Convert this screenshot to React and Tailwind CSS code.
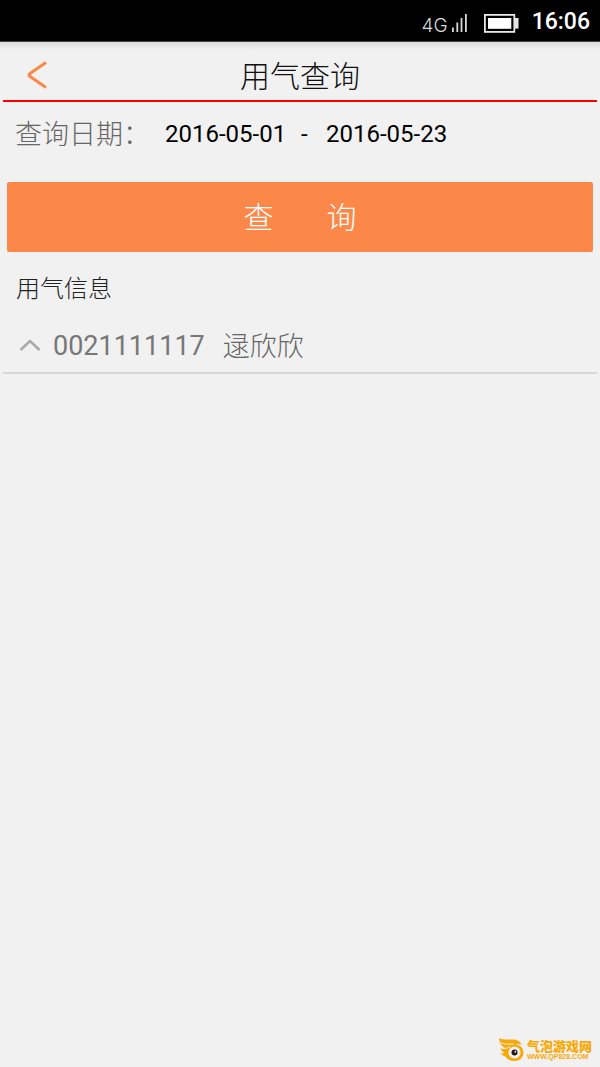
import { useState } from 'react';

const StatusBar = () => (
  <div className="h-[42px] bg-black border-b border-[#444444] text-white flex items-center justify-end pr-[10px] pb-[1px] shrink-0">
    <span className="font-['Inter',sans-serif] font-light text-[19px] leading-6 pt-[11px] text-[#d8d8d8]">4G</span>
    {/* Signal */}
    <svg width="16" height="20" viewBox="0 0 16 20" className="ml-1 mt-[6px] mr-4" fill="#d8d8d8" aria-hidden="true">
      <rect x="0" y="14.5" width="1.8" height="4.5" />
      <rect x="4.4" y="9.5" width="1.8" height="9.5" />
      <rect x="8.6" y="5" width="1.8" height="14" />
      <rect x="13" y="1" width="1.8" height="18" />
    </svg>
    {/* Battery */}
    <svg width="35" height="19" viewBox="0 0 35 19" className="mr-[13px] mt-[6px]" aria-hidden="true">
      <rect x="0.9" y="0.9" width="29.4" height="17" fill="none" stroke="#e6e6e6" strokeWidth="1.8" />
      <rect x="4" y="4" width="23.3" height="10.8" fill="#fff" />
      <rect x="30.5" y="4" width="4" height="10.6" fill="#e6e6e6" />
    </svg>
    <span className="font-['Roboto',sans-serif] font-medium text-[23px] leading-6 pt-[4px]">16:06</span>
  </div>
);

const Header = () => (
  <header className="mx-[3px] h-[60px] border-b-2 border-[#ff0000] grid grid-cols-[1fr_auto_1fr] items-center shrink-0">
    <button type="button" aria-label="返回" className="pl-6 pt-2 justify-self-start">
      <svg width="20" height="28" viewBox="0 0 20 28" fill="none" stroke="#fb8849" strokeWidth="3" aria-hidden="true">
        <path d="M19 1.500 L3 12.6 Q1 14 3 15.4 L19 26.500" />
      </svg>
    </button>
    <h1 className="text-[30px] leading-10 font-light text-[#111111] pt-[6px]">用气查询</h1>
  </header>
);

const DateField = ({ id, label, value, onChange }) => (
  <input
    id={id}
    type="text"
    aria-label={label}
    value={value}
    onChange={(e) => onChange(e.target.value)}
    className="w-[124px] bg-transparent outline-none font-['Roboto',sans-serif] text-[24px] leading-8 text-black"
  />
);

const Watermark = () => (
  <div className="absolute right-[8px] bottom-[5px] flex items-center gap-[3px] text-[#f8a908]">
    <svg width="26" height="25" viewBox="0 0 26 25" aria-hidden="true">
      <path
        fill="#f8a908"
        d="M1 1 C4 3 9 2.500 14 2.500 C19 2.500 22 4 23.500 7.500 C21 6.500 19 6.500 17.500 7 C22 8 25.500 11 25.500 15.500 C25.500 20.500 21.500 24 16.500 24 C12 24 9 22 7.500 19.500 C5.500 19 3.500 18 2.500 16 C4 16.500 5.500 16.500 6.500 16 C4.500 15 3 13 2.500 11 C4.500 12.500 6.500 12.500 8.500 11.500 C4.500 10.500 1.500 6.500 1 1 Z"
      />
      <path d="M3 5.500 C7 8 11 7 16 7 M4.500 11 C7.500 12 10 11 12 9.500" fill="none" stroke="#f1f1f1" strokeWidth="1" />
      <circle cx="16.500" cy="15.500" r="6" fill="#f1f1f1" />
      <circle cx="16.500" cy="15.500" r="3" fill="#221a10" />
      <circle cx="17.300" cy="14.700" r="0.900" fill="#fff" />
    </svg>
    <div>
      <p className="text-[13px] leading-[14px] font-black">气泡游戏网</p>
      <p className="font-['Liberation_Sans',sans-serif] text-[7px] leading-[7px] font-bold">WWW.QP828.COM</p>
    </div>
  </div>
);

const App = () => {
  const [startDate, setStartDate] = useState('2016-05-01');
  const [endDate, setEndDate] = useState('2016-05-23');
  const [open, setOpen] = useState(false);

  return (
    <div className="relative min-h-screen flex flex-col bg-[#f1f1f1] font-['Noto_Sans_CJK_SC',sans-serif]">
      <StatusBar />
      <div className="h-2 -mb-2 bg-linear-to-b from-[#dcdcdc] to-[#f1f1f1]" />
      <Header />

      {/* Query form */}
      <form onSubmit={(e) => e.preventDefault()}>
        <div className="flex items-center pl-[15px] pt-3">
          <label htmlFor="start" className="w-[150px] pb-[2px] text-[27px] leading-[38px] font-light text-[#666666]">
            查询日期：
          </label>
          <DateField id="start" label="开始日期" value={startDate} onChange={setStartDate} />
          <span className="w-[37px] pl-3 font-['Roboto',sans-serif] text-[24px] leading-8">-</span>
          <DateField id="end" label="结束日期" value={endDate} onChange={setEndDate} />
        </div>
        <div className="px-[7px] pt-[28px]">
          <button
            type="submit"
            className="w-full h-[70px] pb-[3px] rounded-xs bg-[#fb8849] text-white text-[30px] font-light flex items-center justify-center gap-[53px]"
          >
            <span>查</span>
            <span>询</span>
          </button>
        </div>
      </form>

      {/* Usage info */}
      <section>
        <h2 className="pl-4 pt-[19px] text-[24px] leading-8 font-light text-[#222222]">用气信息</h2>
        <button
          type="button"
          aria-expanded={open}
          onClick={() => setOpen(!open)}
          className="mx-[3px] mt-[17px] pl-4 pb-[2px] w-[calc(100%-6px)] h-[54px] border-b-2 border-[#d8d8d8] flex items-center text-[27px] text-[#777777]"
        >
          <svg width="22" height="14" viewBox="0 0 22 14" fill="none" stroke="#aaaaaa" strokeWidth="2.6" aria-hidden="true">
            <path d="M1.500 12 L11 3 L20.500 12" />
          </svg>
          <span className="ml-3 pt-[2px] font-['Roboto',sans-serif]">0021111117</span>
          <span className="ml-[18px] font-light text-[#666666]">逯欣欣</span>
        </button>
      </section>

      <Watermark />
    </div>
  );
};

export default App;
